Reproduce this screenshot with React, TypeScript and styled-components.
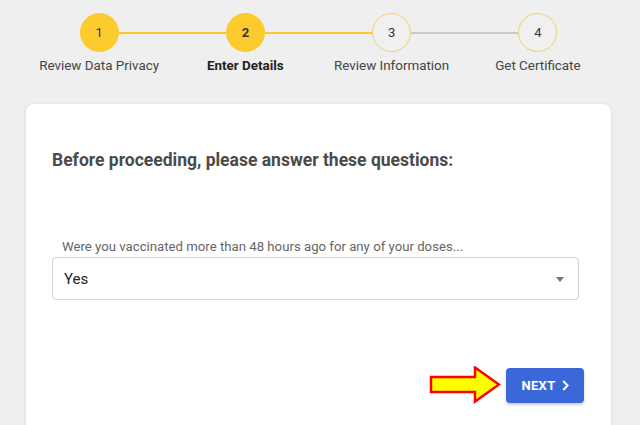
import React from 'react'
import styled, { createGlobalStyle } from 'styled-components'

const GlobalStyle = createGlobalStyle`
  html, body {
    margin: 0;
    padding: 0;
    background: #efefef;
    font-family: Roboto, "Liberation Sans", Arial, sans-serif;
  }
`

const steps = ['Review Data Privacy', 'Enter Details', 'Review Information', 'Get Certificate']
const activeStep = 1

const Page = styled.div`
  width: 640px;
  height: 425px;
  overflow: hidden;
  box-sizing: border-box;
  padding: 13px 29px 0 26px;
`

const Stepper = styled.div`
  display: grid;
  grid-template-columns: repeat(4, 1fr);
`

const Step = styled.div`
  display: flex;
  flex-direction: column;
  align-items: center;
`

const CircleRow = styled.div`
  display: flex;
  align-items: center;
  width: 100%;
`

const Line = styled.div<{ $color: string }>`
  flex: 1;
  height: 2px;
  background: ${p => p.$color};
`

const Circle = styled.div<{ $filled: boolean; $bold: boolean }>`
  width: 39px;
  height: 39px;
  box-sizing: border-box;
  border-radius: 50%;
  display: flex;
  align-items: center;
  justify-content: center;
  font-size: 13px;
  color: #333;
  font-weight: ${p => (p.$bold ? 700 : 400)};
  background: ${p => (p.$filled ? '#fccb2d' : '#f0f0f0')};
  border: 1.5px solid ${p => (p.$filled ? '#fccb2d' : '#f0d26a')};
`

const StepLabel = styled.div<{ $bold: boolean }>`
  margin-top: 6px;
  font-size: 13.4px;
  line-height: 15px;
  white-space: nowrap;
  color: ${p => (p.$bold ? '#222' : '#444')};
  font-weight: ${p => (p.$bold ? 700 : 400)};
`

const Card = styled.div`
  margin-top: 31px;
  background: #fff;
  border-radius: 8px;
  box-shadow: 0 1px 4px rgba(0, 0, 0, 0.12);
  height: 340px;
  box-sizing: border-box;
  padding: 46px 32px 0 26px;
`

const Heading = styled.h2`
  margin: 0;
  font-size: 17.5px;
  line-height: 20px;
  font-weight: 700;
  color: #4a4a4a;
`

const Field = styled.div`
  margin-top: 69px;
  display: flex;
  flex-direction: column;
`

const FieldLabel = styled.label`
  padding-left: 10px;
  font-size: 13.2px;
  line-height: 15px;
  color: #666;
  margin-bottom: 3px;
`

const SelectBox = styled.div`
  height: 43px;
  box-sizing: border-box;
  border: 1px solid #d2d2d2;
  border-radius: 4px;
  display: flex;
  align-items: center;
  justify-content: space-between;
  padding: 0 14px 0 11px;
  font-size: 15px;
  color: #222;
`

const Caret = styled.span`
  width: 0;
  height: 0;
  border-left: 4.5px solid transparent;
  border-right: 4.5px solid transparent;
  border-top: 5px solid #777;
  margin-top: 1px;
`

const Actions = styled.div`
  margin-top: 66px;
  display: flex;
  justify-content: flex-end;
  align-items: center;
  gap: 5px;
  margin-right: -5px;
`

const NextButton = styled.button`
  width: 78px;
  height: 35px;
  border: none;
  border-radius: 4px;
  background: #3b68d8;
  color: #fff;
  font-family: inherit;
  font-size: 13px;
  font-weight: 700;
  letter-spacing: 0.3px;
  display: flex;
  align-items: center;
  justify-content: center;
  gap: 6px;
  box-shadow: 0 2px 3px rgba(0, 0, 0, 0.2);
  cursor: pointer;
`

const Arrow = () => (
  <svg width="72" height="38" viewBox="0 0 72 38">
    <polygon
      points="2,11 46,11 46,1.5 70,18.5 46,35.5 46,26 2,26"
      fill="#ffff00"
      stroke="#f00"
      strokeWidth="2.5"
      strokeLinejoin="miter"
    />
  </svg>
)

const Chevron = () => (
  <svg width="7" height="11" viewBox="0 0 7 11">
    <path d="M1.2 1 L5.6 5.5 L1.2 10" fill="none" stroke="#fff" strokeWidth="2" />
  </svg>
)

const lineColor = (i: number) => (i <= activeStep ? '#f7c92a' : '#c9c9c9')

export default function App() {
  return (
    <Page>
      <GlobalStyle />
      <Stepper>
        {steps.map((label, i) => (
          <Step key={label}>
            <CircleRow>
              <Line $color={i === 0 ? 'transparent' : lineColor(i - 1)} />
              <Circle $filled={i <= activeStep} $bold={i === activeStep}>
                {i + 1}
              </Circle>
              <Line $color={i === steps.length - 1 ? 'transparent' : lineColor(i)} />
            </CircleRow>
            <StepLabel $bold={i === activeStep}>{label}</StepLabel>
          </Step>
        ))}
      </Stepper>
      <Card>
        <Heading>Before proceeding, please answer these questions:</Heading>
        <Field>
          <FieldLabel>Were you vaccinated more than 48 hours ago for any of your doses...</FieldLabel>
          <SelectBox>
            <span>Yes</span>
            <Caret />
          </SelectBox>
        </Field>
        <Actions>
          <Arrow />
          <NextButton>
            NEXT <Chevron />
          </NextButton>
        </Actions>
      </Card>
    </Page>
  )
}
